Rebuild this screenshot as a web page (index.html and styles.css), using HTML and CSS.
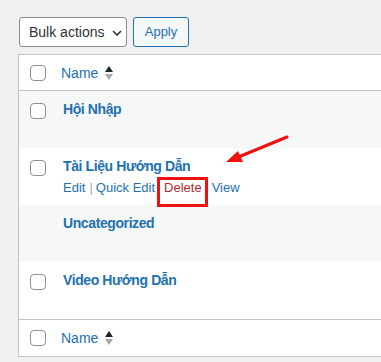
FILE: index.html
```html
<!DOCTYPE html>
<html>
<head>
<meta charset="utf-8">
<link rel="stylesheet" href="styles.css">
</head>
<body>
<div class="page">
  <div class="tablenav">
    <div class="select">Bulk actions
      <svg class="chev" width="10" height="6" viewBox="0 0 10 6"><path d="M1 1 L5 5 L9 1" fill="none" stroke="#2c3338" stroke-width="1.6"/></svg>
    </div>
    <div class="btn">Apply</div>
  </div>
  <div class="table">
    <div class="row head">
      <div class="cb"><span class="box"></span></div>
      <div class="name head-name"><span class="lnk">Name</span><span class="sort"><i class="up"></i><i class="down"></i></span></div>
    </div>
    <div class="row alt">
      <div class="cb"><span class="box"></span></div>
      <div class="name"><div class="title">Hội Nhập</div></div>
    </div>
    <div class="row">
      <div class="cb"><span class="box"></span></div>
      <div class="name"><div class="title">Tài Liệu Hướng Dẫn</div>
        <div class="actions"><span class="lnk">Edit</span><span class="sep">|</span><span class="lnk">Quick Edit</span><span class="del">Delete</span><span class="lnk">View</span></div>
      </div>
    </div>
    <div class="row alt">
      <div class="cb"></div>
      <div class="name"><div class="title">Uncategorized</div></div>
    </div>
    <div class="row">
      <div class="cb"><span class="box"></span></div>
      <div class="name"><div class="title">Video Hướng Dẫn</div></div>
    </div>
    <div class="row head foot">
      <div class="cb"><span class="box"></span></div>
      <div class="name head-name"><span class="lnk">Name</span><span class="sort"><i class="up"></i><i class="down"></i></span></div>
    </div>
  </div>
  <div class="redbox"></div>
  <svg class="arrow" width="381" height="362" viewBox="0 0 381 362">
    <line x1="287" y1="137" x2="236" y2="158" stroke="#f01010" stroke-width="3" stroke-linecap="round"/>
    <polygon points="226,162 238,151 243,162" fill="#f01010"/>
  </svg>
</div>
</body>
</html>
```
FILE: styles.css
```css
html, body { margin: 0; padding: 0; }
body {
  background: #f0f0f1;
  font-family: "Liberation Sans", Arial, sans-serif;
  color: #2c3338;
  overflow: hidden;
  width: 381px;
  height: 362px;
}
.page {
  position: relative;
  padding: 17px 0 0 19px;
  height: 362px;
  box-sizing: border-box;
  overflow: hidden;
}
.tablenav { display: flex; gap: 6px; height: 30px; }
.select {
  box-sizing: border-box;
  width: 108px; height: 30px;
  border: 1px solid #8c8f94; border-radius: 3px;
  background: #fff;
  font-size: 14px; line-height: 28px;
  padding-left: 9px;
  display: flex; align-items: center; gap: 8px;
}
.chev { margin-top: 1px; }
.btn {
  box-sizing: border-box;
  width: 56px; height: 30px;
  border: 1px solid #2271b1; border-radius: 3px;
  background: #f6f7f7; color: #2271b1;
  font-size: 13px; line-height: 28px; text-align: center;
}
.table {
  margin: 7px 0 0 -1px;
  width: 400px;
  border: 1px solid #c3c4c7;
  background: #fff;
}
.row { display: flex; height: 57px; }
.row.alt { background: #f6f7f7; }
.row.head { height: 35px; border-bottom: 1px solid #c3c4c7; align-items: center; }
.row.foot { height: 36px; border-bottom: none; border-top: 1px solid #c3c4c7; }
.cb { width: 44px; padding-left: 11px; box-sizing: border-box; }
.row:not(.head) .cb { padding-top: 12px; }
.box {
  display: block; box-sizing: border-box;
  width: 16px; height: 16px;
  border: 1px solid #8c8f94; border-radius: 4px; background: #fff;
}
.name { padding: 8px 0 0 0; }
.head-name { padding: 0; margin-left: -2px; display: flex; align-items: center; font-size: 14px; }
.lnk { color: #2271b1; }
.title { color: #2271b1; font-weight: bold; font-size: 14px; line-height: 20px; letter-spacing: -0.4px; }
.actions { font-size: 13px; line-height: 20px; padding-top: 2px; display: flex; }
.sep { color: #a7aaad; margin: 0 3px 0 4px; }
.del { color: #b32d2e; margin: 0 10px 0 9px; }
.sort { display: inline-flex; flex-direction: column; gap: 2px; margin-left: 7px; }
.sort i { display: block; width: 0; height: 0; border-left: 4px solid transparent; border-right: 4px solid transparent; }
.sort .up { border-bottom: 6px solid #1d2327; }
.sort .down { border-top: 6px solid #a7aaad; }
.redbox {
  position: absolute; left: 157px; top: 177px;
  width: 51px; height: 30px; box-sizing: border-box;
  border: 3px solid #ee1111;
}
.arrow { position: absolute; left: 0; top: 0; pointer-events: none; }
```
